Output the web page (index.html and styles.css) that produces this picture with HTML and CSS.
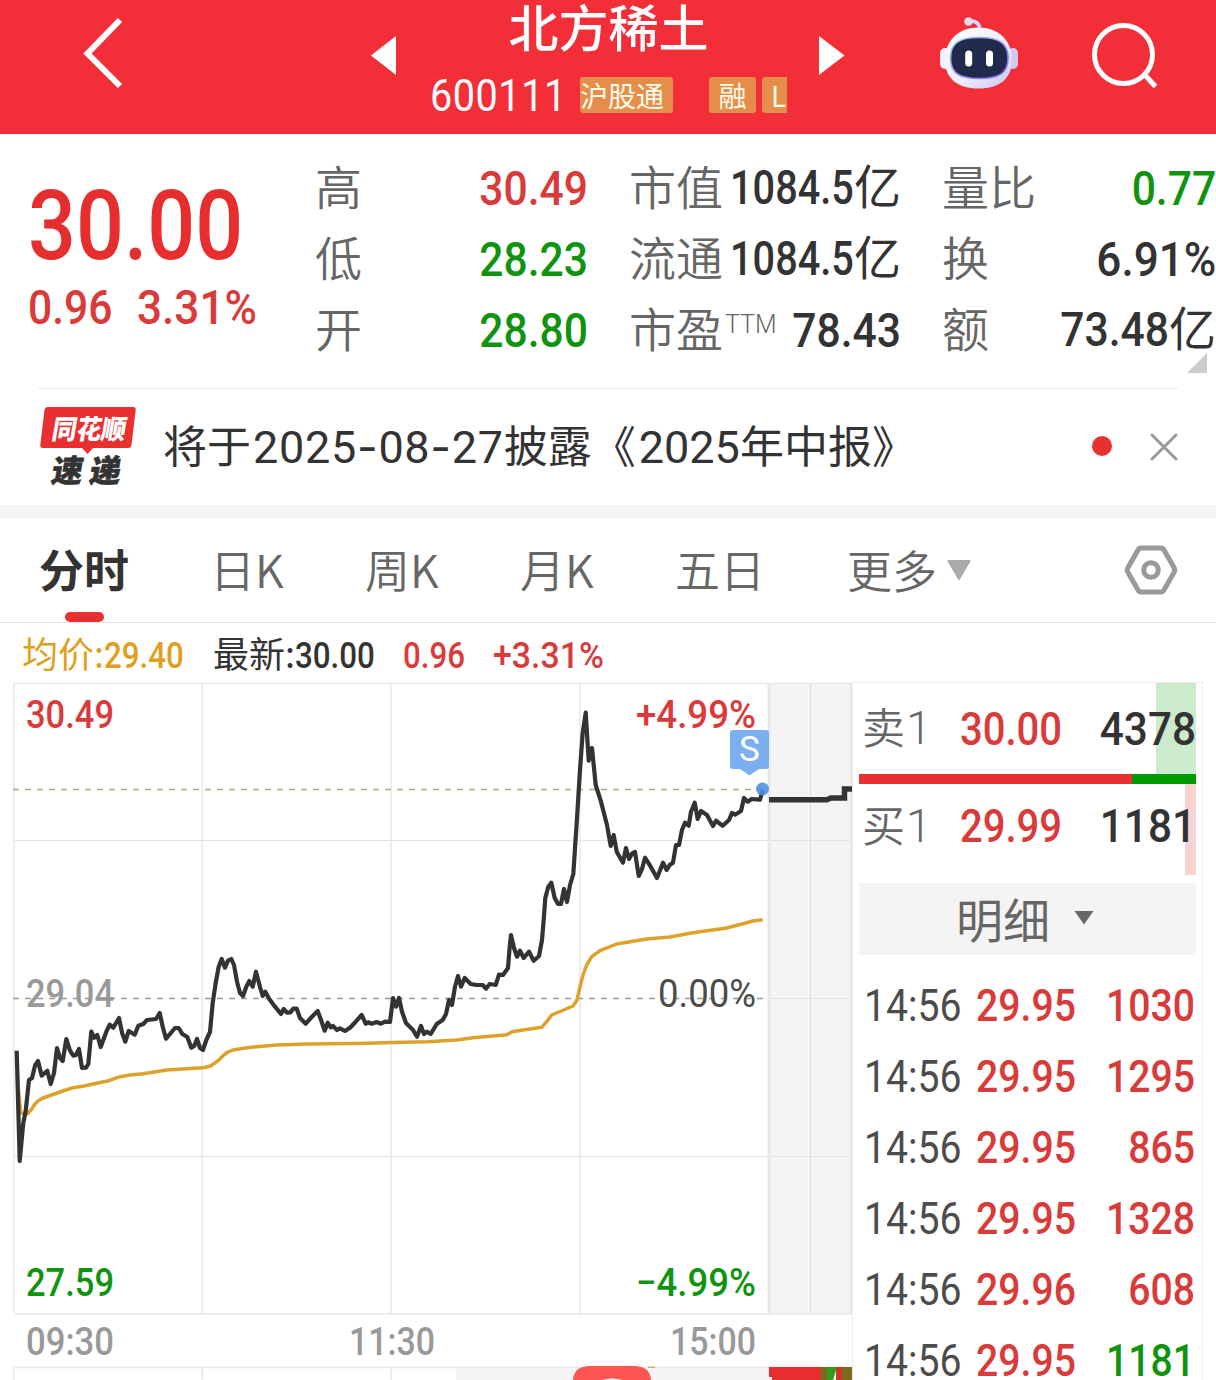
FILE: index.html
```html
<!DOCTYPE html>
<html lang="zh-CN">
<head>
    <meta charset="UTF-8">
    <meta name="viewport" content="width=device-width, initial-scale=1.0">
    <title>北方稀土 600111</title>
    <link rel="stylesheet" href="styles.css">
</head>
<body>
    <header class="header">
        <svg class="back" width="50" height="80" viewBox="0 0 50 80"><path d="M41 7 L8.500 40.500 L41 73" fill="none" stroke="#fff" stroke-width="6"/></svg>
        <svg class="arrow" width="26" height="40" viewBox="0 0 26 40"><path d="M25 0 V39 L0 19.5 Z" fill="#fff"/></svg>
        <div class="stock">
            <h1>北方稀土</h1>
            <div class="stock-code">
                <span class="code num left">600111</span>
                <span class="tag tag-hgt">沪股通</span>
                <span class="tag tag-rong">融</span>
                <span class="tag tag-l">L</span>
            </div>
        </div>
        <svg class="arrow arrow-next" width="26" height="40" viewBox="0 0 26 40"><path d="M0 0 V39 L25.500 19.500 Z" fill="#fff"/></svg>
        <svg class="robot" width="78" height="74" viewBox="940 16 78 74">
            <defs>
                <linearGradient id="head" x1="0" y1="0" x2="1" y2="1">
                    <stop offset="0" stop-color="#fff"/>
                    <stop offset="0.55" stop-color="#eeedfb"/>
                    <stop offset="1" stop-color="#c9c6f0"/>
                </linearGradient>
                <linearGradient id="rim" x1="0" y1="0" x2="1" y2="1">
                    <stop offset="0" stop-color="#8fd6f2"/>
                    <stop offset="0.5" stop-color="#a48cf5"/>
                    <stop offset="1" stop-color="#7b62e8"/>
                </linearGradient>
            </defs>
            <path d="M969 21 Q979 20 980 29" fill="none" stroke="#dcd5f3" stroke-width="3.500"/>
            <circle cx="968.500" cy="21.500" r="4.300" fill="#e6dcf5"/>
            <rect x="940" y="48" width="10" height="21" rx="5" fill="#f3effc"/>
            <rect x="1008" y="48" width="10" height="21" rx="5" fill="#d0c9f0"/>
            <path d="M978.500 27.500 C998 27.500 1012 40 1012 60 C1012 79 999 88.500 978.500 88.500 C958 88.500 945 79 945 60 C945 40 959 27.500 978.500 27.500 Z" fill="url(#head)"/>
            <path d="M979 37.500 C999 37.500 1008 43 1008 58 C1008 73 999 78.500 979 78.500 C959 78.500 950.500 73 950.500 58 C950.500 43 959 37.500 979 37.500 Z" fill="#202b4c" stroke="url(#rim)" stroke-width="1.600"/>
            <rect x="965.200" y="50.500" width="7" height="16" rx="3.500" fill="#fff"/>
            <rect x="986" y="50.500" width="7" height="16" rx="3.500" fill="#fff"/>
        </svg>
        <svg class="search" width="68" height="70" viewBox="1090 20 68 70">
            <circle cx="1123.500" cy="54.500" r="29" fill="none" stroke="#fff" stroke-width="5"/>
            <path d="M1144 74 L1155.500 86.500" stroke="#fff" stroke-width="5"/>
        </svg>
    </header>

    <!-- Price and key figures -->
    <section class="quote">
        <div class="price">
            <div class="price-now num left">30.00</div>
            <div class="price-change">
                <span class="num left">0.96</span>
                <span class="num left percent">3.31%</span>
            </div>
        </div>
        <div class="figures">
            <div class="fig"><span class="label">高</span><span class="num red">30.49</span></div>
            <div class="fig"><span class="label">市值</span><span class="value"><span class="num tight">1084.5</span>亿</span></div>
            <div class="fig"><span class="label">量比</span><span class="num green">0.77</span></div>
            <div class="fig"><span class="label">低</span><span class="num green">28.23</span></div>
            <div class="fig"><span class="label">流通</span><span class="value"><span class="num tight">1084.5</span>亿</span></div>
            <div class="fig"><span class="label">换</span><span class="num percent">6.91%</span></div>
            <div class="fig"><span class="label">开</span><span class="num green">28.80</span></div>
            <div class="fig"><span class="label">市盈<sup>TTM</sup></span><span class="num">78.43</span></div>
            <div class="fig"><span class="label">额</span><span class="value"><span class="num">73.48</span>亿</span></div>
        </div>
        <svg class="corner" width="20" height="20" viewBox="0 0 20 20"><path d="M20 0 V20 H0 Z" fill="#ccc"/></svg>
    </section>

    <!-- News line -->
    <section class="notice">
        <svg class="notice-logo" width="98" height="82" viewBox="39 405 98 82">
            <path d="M48 406 H133 Q136 406 135.700 409 L131.500 444 Q131 447 128 447 H93 L87.500 453 L82 447 H43 Q40 447 40.300 444 L44.500 409 Q45 406 48 406 Z" fill="#e83030"/>
            <text class="logo-top" x="51" y="438" textLength="74" lengthAdjust="spacingAndGlyphs" transform="translate(77 0) skewX(-10)">同花顺</text>
            <text class="logo-bottom" transform="translate(84 0) skewX(-10)"><tspan x="51" y="481" textLength="31" lengthAdjust="spacingAndGlyphs">速</tspan><tspan x="89" y="481" textLength="31" lengthAdjust="spacingAndGlyphs">递</tspan></text>
        </svg>
        <p class="notice-text">将于<span class="date">2025<i>-</i>08<i>-</i>27</span>披露<span class="open">《</span><span class="date year">2025</span>年中报》</p>
        <span class="dot"></span>
        <svg width="28" height="28" viewBox="0 0 28 28"><path d="M2 2 L26 26 M26 2 L2 26" stroke="#999" stroke-width="3" stroke-linecap="round"/></svg>
    </section>

    <nav class="tabs">
        <a class="tab active">分时</a>
        <a class="tab">日K</a>
        <a class="tab">周K</a>
        <a class="tab">月K</a>
        <a class="tab">五日</a>
        <a class="tab more">更多<svg width="24" height="20" viewBox="0 0 24 20"><path d="M1.500 1 H22.500 L12 19 Z" fill="#aaa" stroke="#aaa" stroke-width="2" stroke-linejoin="round"/></svg></a>
        <svg class="settings" width="54" height="50" viewBox="0 0 54 50">
            <path d="M17 3 H37 Q39 3 40 5 L50 22.500 Q51.500 25 50 27.500 L40 45 Q39 47 37 47 H17 Q15 47 14 45 L4 27.500 Q2.500 25 4 22.500 L14 5 Q15 3 17 3 Z" fill="none" stroke="#999" stroke-width="5"/>
            <circle cx="27" cy="25" r="7.300" fill="none" stroke="#999" stroke-width="5"/>
        </svg>
    </nav>

    <div class="summary">
        <span class="avg">均价:<b class="num left">29.40</b></span>
        <span class="last">最新:<b class="num left">30.00</b></span>
        <b class="num left red chg">0.96</b>
        <b class="num left red percent">+3.31%</b>
    </div>

    <main class="board">
        <svg class="chart" width="852" height="698" viewBox="0 682 852 698">
            <!-- grid -->
            <rect x="768" y="683" width="84" height="631" fill="#f4f4f4"/>
            <g stroke="#e8e8e8" stroke-width="1.500" fill="none">
                <path d="M13.500 683.500 H852 M13.500 1314 H852 M14 683 V1314 M202 683 V1314 M391 683 V1314 M580 683 V1314"/>
                <path d="M14 840.500 H852 M14 1156.500 H852 M768 998.500 H852" stroke="#e4e4e4" stroke-width="1"/>
                <path d="M769 683 V1314 M851.500 683 V1314" stroke-width="3"/>
                <path d="M810.500 683 V1314" stroke="#ddd" stroke-width="1"/>
            </g>
            <path d="M13 789.500 H762" stroke="#b5a878" stroke-width="1.700" stroke-dasharray="6 6"/>
            <path d="M13 998.500 H764" stroke="#999" stroke-width="1.700" stroke-dasharray="6 6"/>

            <!-- average price -->
            <polyline class="line-avg" points="16.7,1052 18,1085 20.7,1113 27.7,1113.700 31.7,1109 35,1104 38,1101 43,1098 60,1092 71.7,1088 84,1086 100,1082.500 108,1081 120,1076.700 130,1075 143,1073.700 166.700,1070 186.700,1068.700 203,1067.700 210.700,1066 218,1060.700 223,1055.700 228,1052 233,1050 246.700,1047.700 276.700,1045 306.700,1044 356.700,1043.500 393,1042.500 428,1041.700 456.700,1040 473,1037.700 506.700,1034.700 513,1031.500 541.700,1027.300 546.700,1021.700 551.700,1015 560,1011.500 573,1006 577,1000 580,986.700 583,975 586.700,965 591.700,956.700 600,950.700 616.700,944 646.700,939 670,937 693,932.700 726.700,928 753,921 762.700,919.700"/>

            <!-- price -->
            <polyline class="line-price" points="16.7,1050.7 19.7,1161 23.3,1123 25.7,1111 29,1080 32,1078 35,1065.7 38,1061 41.7,1075.7 47.3,1070.7 50.7,1084 54,1073 57,1048 60,1058 62.7,1061 66.3,1039 70,1050.7 73.3,1055.7 76,1055 79,1049 82,1068 86,1067.7 88.3,1064 91.3,1031.7 94.3,1037.7 97.3,1035 100.7,1047 106.7,1030.7 109.7,1024.7 113.3,1027.7 119,1018 122,1032.7 125.3,1041.7 128.7,1031 134.7,1034.7 138.3,1025.7 143.3,1024 147,1020 156,1019 159.7,1013 162.7,1026.7 166,1038.7 171.7,1032 175,1028 178.7,1028 182.3,1034 187.3,1037 191.3,1047.7 194.3,1045.7 197,1039 200,1048 203,1050 206.3,1040 210,1032 212.7,1003 215.7,983 218.7,966.7 221.7,959 225,967.7 228,960.7 231.3,959 234,965 237,981.7 240,993 243,996 246.3,986.7 249.3,981 252.7,986.7 256,971.7 260,987 262.7,996 265.3,991.7 269.3,999 275,1006.7 281,1014 283.7,1009 287,1012.7 290.3,1012.3 293.3,1008.7 296.7,1008.7 300,1018 305.7,1023.7 311.7,1017 317.7,1011 321.3,1020.7 324.7,1030.7 327.7,1022.7 330.7,1027.3 333,1026 337,1030 340,1028.3 345,1031 350,1027.7 355.7,1021.7 361.7,1015 365.7,1023.7 368.3,1022.3 371.7,1023.7 376.7,1022 381,1023.7 385,1021.7 390,1022 393,998 396,1006.7 399,998 402,1011.7 406,1023 413,1030 417,1036.7 421,1026 424,1034 427,1031.7 430.7,1034 436.7,1024 442.7,1020 446,1014 449,1000 452,1005 455,986.7 458,976 461,986.7 464.7,978 470.7,984 476.7,985 482.7,985 486,988.7 489.7,984 495.7,985 499,974.7 503,975 508,968 509.7,946.7 511,935 514,948 517,956.7 520,950.7 523.7,958 529,951.7 533.7,960.7 539,956 542,940 543.7,920 545.3,898 548.3,886.7 551.3,882.7 554.7,898 558,904 561,904 564,889 567,902 570,885 573.3,874 576.7,823 580,770 582.7,733 585.7,712.7 588.7,760.7 592,748 595.7,785 601,801.7 607,825 610.7,846 613.7,835 616.7,851.7 623,862.7 626,848 629,859 632.3,853.3 635,852 638.7,876 642,869 645,857.7 650.7,866.7 657,878 663,862.7 666.7,870 669.7,865 673,862.7 676,845 679,845 682,830 685,822.7 688.7,825.7 691,811.7 694.7,802.7 697.7,819 701,811 707,815 713,826 716,820.7 722.7,825.7 729,820 732,813 735,814.7 741,811 744,798 747.7,801.7 751.7,799 760,799.7 762.7,790"/>
            <path d="M769 799.800 H827 L831 798 H844.500 V789 H852" fill="none" stroke="#333" stroke-width="5.500"/>
            <circle cx="762.500" cy="789" r="6.500" fill="#4b8de0" fill-opacity="0.880"/>

            <!-- axis labels -->
            <g class="axis">
                <text x="26" y="728" class="up" textLength="88" lengthAdjust="spacingAndGlyphs">30.49</text>
                <text x="26" y="1007" class="mid" textLength="88" lengthAdjust="spacingAndGlyphs">29.04</text>
                <text x="26" y="1296" class="down" textLength="88" lengthAdjust="spacingAndGlyphs">27.59</text>
                <text x="636" y="728" class="up" textLength="120" lengthAdjust="spacingAndGlyphs">+4.99%</text>
                <text x="658" y="1007" class="zero" textLength="98" lengthAdjust="spacingAndGlyphs">0.00%</text>
                <text x="636" y="1296" class="down" textLength="120" lengthAdjust="spacingAndGlyphs">−4.99%</text>
                <text x="26" y="1355" class="mid" textLength="88" lengthAdjust="spacingAndGlyphs">09:30</text>
                <text x="349" y="1355" class="mid" textLength="86" lengthAdjust="spacingAndGlyphs">11:30</text>
                <text x="670" y="1355" class="mid" textLength="86" lengthAdjust="spacingAndGlyphs">15:00</text>
            </g>

            <!-- sell marker -->
            <path d="M733 730 H766 Q769 730 769 733 V766 Q769 769 766 769 H759 L749.500 775.500 L740 769 H733 Q730 769 730 766 V733 Q730 730 733 730 Z" fill="#7caff0"/>
            <text class="marker" x="749.500" y="761" text-anchor="middle">S</text>

            <!-- volume pane, top edge -->
            <path d="M13.500 1367.500 H852" stroke="#e8e8e8" stroke-width="1.500"/>
            <path d="M14 1368 V1380 M202 1368 V1380 M391 1368 V1380" stroke="#e8e8e8" stroke-width="1.500"/>
            <rect x="456" y="1368" width="396" height="12" fill="#f4f4f4"/>
            <rect x="648" y="1366.500" width="7" height="1.500" fill="#c9b66a"/>
            <path d="M573 1380 Q574 1366 590 1366 H634 Q650 1366 651 1380 Z" fill="#fd5652"/>
            <path d="M602 1380 Q612 1377 622 1380 Z" fill="#fff"/>
            <rect x="769" y="1367" width="52" height="13" fill="#e62e2e"/>
            <rect x="821" y="1367" width="31" height="13" fill="#7d6a20"/>
            <rect x="827" y="1367" width="8" height="13" fill="#2f9c1a"/>
            <rect x="837" y="1367" width="5" height="13" fill="#d5302a"/>
            <path d="M769 1377 H772 V1380 H769 Z M833 1380 L836 1370 V1380 Z" fill="#f4f4f4"/>
        </svg>

        <aside class="orders">
            <div class="order sell"><span class="side">卖<em>1</em></span><span class="num left red">30.00</span><span class="num qty">4378</span></div>
            <div class="ratio"><div class="ratio-buy"></div></div>
            <div class="order buy"><span class="side">买<em>1</em></span><span class="num left red">29.99</span><span class="num qty">1181</span></div>
            <div class="detail">明细<svg width="20" height="14" viewBox="0 0 20 14"><path d="M0.500 0 H19.500 L10 13.500 Z" fill="#666"/></svg></div>
            <div class="trades">
                <div class="trade"><span class="num left time">14:56</span><span class="num left red">29.95</span><span class="num red">1030</span></div>
                <div class="trade"><span class="num left time">14:56</span><span class="num left red">29.95</span><span class="num red">1295</span></div>
                <div class="trade"><span class="num left time">14:56</span><span class="num left red">29.95</span><span class="num red">865</span></div>
                <div class="trade"><span class="num left time">14:56</span><span class="num left red">29.95</span><span class="num red">1328</span></div>
                <div class="trade"><span class="num left time">14:56</span><span class="num left red">29.96</span><span class="num red">608</span></div>
                <div class="trade"><span class="num left time">14:56</span><span class="num left red">29.95</span><span class="num green">1181</span></div>
            </div>
        </aside>
    </main>
</body>
</html>
```

FILE: styles.css
```css
* {
    box-sizing: border-box;
}
body {
    margin: 0;
    width: 1216px;
    height: 1380px;
    overflow: hidden;
    background: #fff;
    color: #333;
    font-family: Roboto, "Noto Sans CJK SC", sans-serif;
}
svg {
    display: block;
    flex-shrink: 0;
}

/* narrow figures */
.num {
    display: inline-block;
    font-family: Roboto, sans-serif;
    font-weight: 500;
    white-space: nowrap;
    transform: scaleX(0.87);
    transform-origin: right center;
}
.num.left {
    transform-origin: left center;
}
.num.tight {
    transform: scaleX(0.81);
}
.num.percent {
    transform: scaleX(0.9);
}
.red {
    color: #d93a3a;
}
.green {
    color: #109410;
}

/* header */
.header {
    display: grid;
    grid-template-columns: 371px 59px 357px 153px 150px 1fr;
    height: 134px;
    background: #f22f38;
    color: #fff;
}
.back {
    margin: 13px 0 0 79px;
}
.arrow {
    margin-top: 36px;
}
.arrow-next {
    margin-left: 32px;
}
.robot {
    margin-top: 16px;
}
.search {
    margin-top: 20px;
}
.stock h1 {
    margin: 0;
    height: 70px;
    font-family: "Noto Sans CJK SC", sans-serif;
    font-size: 50px;
    font-weight: 500;
    line-height: 50px;
    text-align: center;
}
.stock-code {
    display: flex;
    height: 50px;
    align-items: center;
    overflow: hidden;
}
.num.code {
    width: 150px;
    flex-shrink: 0;
    font-size: 45px;
    font-weight: 400;
    letter-spacing: 0.6px;
    transform: scaleX(0.88);
}
.tag {
    height: 36px;
    line-height: 36px;
    border-radius: 3px;
    background: #e58e4b;
    color: #fffbe8;
    font-size: 28px;
    font-family: "Noto Sans CJK SC", sans-serif;
    white-space: nowrap;
    flex-shrink: 0;
}
.tag-hgt {
    width: 93px;
}
.tag-rong {
    width: 47px;
    margin: 0 6px 0 36px;
    text-align: center;
}
.tag-l {
    width: 25px;
    padding-left: 9px;
    border-radius: 3px 0 0 3px;
}

/* quote */
.quote {
    position: relative;
    display: flex;
    height: 254px;
    padding-top: 19px;
}
.price {
    width: 315px;
    padding: 24px 0 0 28px;
    color: #e62e2e;
}
.price-now {
    height: 98px;
    font-size: 97px;
    line-height: 98px;
}
.price-change {
    display: flex;
    height: 66px;
    line-height: 66px;
    font-size: 49px;
    color: #d93a3a;
}
.price-change span:first-child {
    width: 109px;
}
.figures {
    display: grid;
    grid-template-columns: 273px 272px 274px;
    grid-auto-rows: 71px;
    column-gap: 41px;
    font-size: 49px;
}
.fig {
    display: flex;
    justify-content: space-between;
    line-height: 71px;
    white-space: nowrap;
}
.fig .label {
    width: 0;
    font-family: "Noto Sans CJK SC", sans-serif;
    font-size: 47px;
    font-weight: 350;
    color: #666;
    line-height: 63px;
}
.fig .value {
    font-size: 47px;
    font-weight: 400;
    line-height: 70px;
}
.fig .value .num {
    font-size: 49px;
    line-height: 70px;
}
.label sup {
    display: inline-block;
    margin-left: 2px;
    font-family: Roboto, sans-serif;
    font-size: 25px;
    line-height: 20px;
    vertical-align: 14px;
}
.corner {
    position: absolute;
    right: 9px;
    top: 219px;
}

/* notice */
.notice {
    display: flex;
    align-items: center;
    height: 117px;
    margin: 0 38px;
    border-top: 1px solid #ebebeb;
}
.notice-logo {
    margin-left: 1px;
    overflow: visible;
}
.logo-top,
.logo-bottom {
    font-family: "Noto Sans CJK SC", sans-serif;
    font-weight: 900;
    font-size: 27px;
    fill: #fff;
}
.logo-bottom {
    font-size: 31px;
    fill: #333;
    stroke: #333;
    stroke-width: 0.6px;
}
.notice-text {
    flex: 1;
    margin: -2px 0 0 26px;
    font-family: "Noto Sans CJK SC", sans-serif;
    font-size: 44px;
    line-height: 60px;
    white-space: nowrap;
}
.date {
    margin-left: 2px;
    font-family: Roboto, sans-serif;
    font-size: 45px;
    letter-spacing: 0.7px;
}
.date.year {
    letter-spacing: 0;
}
.date i {
    font-family: Inter, sans-serif;
    font-style: normal;
}
.open {
    margin-right: 1px;
}
.dot {
    width: 20px;
    height: 20px;
    margin: -2px 38px 0 0;
    border-radius: 50%;
    background: #e83030;
}

/* tabs */
.tabs {
    display: flex;
    height: 118px;
    padding: 0 38px 0 39px;
    border-top: 13px solid #f4f4f4;
    border-bottom: 1px solid #e4e4e4;
    font-size: 45px;
    line-height: 102px;
    color: #666;
    font-family: "Noto Sans CJK SC", sans-serif;
    font-weight: 350;
}
.tab {
    display: flex;
    flex-direction: column;
    width: 155px;
    height: 104px;
}
.tab.active {
    width: 171px;
    font-weight: 700;
    color: #333;
}
.tab.active::after {
    content: "";
    width: 39px;
    height: 10px;
    margin: -8px 0 0 26px;
    border-radius: 5px;
    background: #e83030;
    flex-shrink: 0;
}
.tab:nth-child(5) {
    width: 172px;
}
.tab.more {
    flex-direction: row;
    align-items: center;
    gap: 10px;
    width: auto;
}
.settings {
    margin: 27px 0 0 auto;
}

/* summary line */
.summary {
    display: flex;
    height: 59px;
    padding-left: 22px;
    font-family: "Noto Sans CJK SC", sans-serif;
    font-size: 36px;
    line-height: 59px;
    white-space: nowrap;
}
.avg {
    width: 191px;
    color: #dfa01e;
}
.last {
    width: 190px;
}
.summary > .num {
    line-height: 66px;
}
.chg {
    width: 90px;
}
.summary .num.percent {
    transform: scaleX(0.94);
}

/* chart */
.board {
    display: flex;
}
.line-avg,
.line-price {
    fill: none;
    stroke: #333;
    stroke-width: 4.200px;
    stroke-linejoin: round;
}
.line-avg {
    stroke: #dca22a;
    stroke-width: 3.500px;
}
.axis {
    font-size: 39px;
    font-weight: 500;
}
.up {
    fill: #d93a3a;
}
.down {
    fill: #109410;
}
.mid {
    fill: #999;
}
.zero {
    fill: #4c4c4c;
    font-weight: 400;
}
.marker {
    font-size: 35px;
    fill: #fff;
}

/* order book */
.orders {
    width: 351px;
    height: 698px;
    padding: 0 6px;
    border: solid #ebebeb;
    border-width: 1px 1px 0 1px;
}
.order {
    display: grid;
    grid-template-columns: 101px 115px 1fr;
    height: 91px;
    line-height: 93px;
    font-size: 46px;
}
.order.sell {
    background: linear-gradient(#cceacc, #cceacc) right / 40px 100% no-repeat;
}
.order.buy {
    background: linear-gradient(#f8d3d3, #f8d3d3) right / 11px 100% no-repeat;
    line-height: 85px;
}
.side {
    padding-left: 3px;
    font-family: "Noto Sans CJK SC", sans-serif;
    font-size: 43px;
    font-weight: 350;
    line-height: 85px;
    color: #666;
}
.buy .side {
    line-height: 78px;
}
.side em {
    margin-left: 1px;
    font-family: Roboto, sans-serif;
    font-size: 46px;
    font-weight: 300;
    font-style: normal;
}
.order .num.qty {
    text-align: right;
    transform: scaleX(0.92);
}
.ratio {
    height: 10px;
    background: #009900;
}
.ratio-buy {
    width: 273px;
    height: 10px;
    background: #e83030;
}
.detail {
    display: flex;
    align-items: center;
    justify-content: center;
    gap: 24px;
    height: 72px;
    margin-top: 8px;
    padding: 0 5px 2px 0;
    background: #f4f4f4;
    font-family: "Noto Sans CJK SC", sans-serif;
    font-size: 47px;
    line-height: 66px;
    color: #666;
}
.trades {
    padding: 15px 1px 0 5px;
}
.trade {
    display: grid;
    grid-template-columns: 112px 112px 1fr;
    height: 71px;
    line-height: 71px;
    font-size: 45px;
}
.trade .num:last-child {
    text-align: right;
}
.time {
    color: #4c4c4c;
    font-weight: 400;
}
```
